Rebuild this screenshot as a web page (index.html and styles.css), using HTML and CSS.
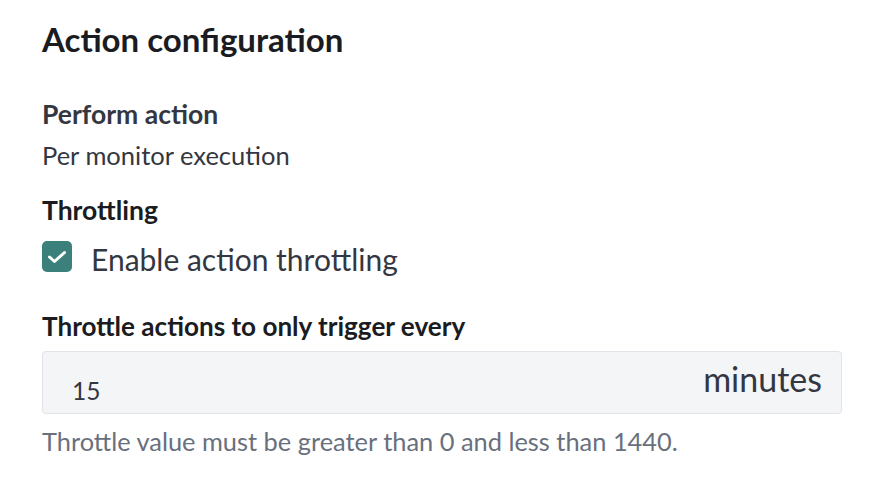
FILE: index.html
```html
<!DOCTYPE html>
<html>
<head>
<meta charset="utf-8">
<link rel="stylesheet" href="styles.css">
</head>
<body>
<div class="panel">
  <h2 class="title">Action configuration</h2>
  <div class="label label-perform">Perform action</div>
  <div class="value">Per monitor execution</div>
  <div class="label label-throttling">Throttling</div>
  <div class="check-row">
    <span class="checkbox">
      <svg width="20" height="14" viewBox="0 0 20 14"><path d="M2.5 7 L7.5 11.5 L17.5 2.5" fill="none" stroke="#fff" stroke-width="3" stroke-linecap="round" stroke-linejoin="round"/></svg>
    </span>
    <span class="check-label">Enable action throttling</span>
  </div>
  <div class="label label-every">Throttle actions to only trigger every</div>
  <div class="field">
    <span class="field-value">15</span>
    <span class="field-unit">minutes</span>
  </div>
  <div class="help">Throttle value must be greater than 0 and less than 1440.</div>
</div>
</body>
</html>
```
FILE: styles.css
```css
html, body {
  margin: 0;
  padding: 0;
  background: #ffffff;
}
body {
  font-family: Lato, "Open Sans", sans-serif;
  color: #343741;
}
.panel {
  padding: 19px 0 0 42px;
  width: 800px;
}
.title {
  margin: 0;
  font-size: 33px;
  line-height: 40px;
  font-weight: 700;
  color: #1a1c21;
}
.label {
  font-size: 26.5px;
  line-height: 30px;
  font-weight: 700;
  color: #1a1c21;
}
.label-perform {
  margin-top: 40px;
  color: #343741;
}
.value {
  margin-top: 11px;
  font-size: 25.5px;
  line-height: 30px;
}
.label-throttling {
  margin-top: 25px;
}
.check-row {
  margin-top: 16px;
  display: flex;
  align-items: center;
  gap: 19px;
  height: 31px;
}
.checkbox {
  width: 30px;
  height: 31px;
  border-radius: 5px;
  background: #3b807a;
  display: flex;
  align-items: center;
  justify-content: center;
  flex: none;
}
.check-label {
  font-size: 30px;
  line-height: 31px;
  padding-top: 5px;
}
.label-every {
  margin-top: 39px;
  font-size: 26.1px;
}
.field {
  margin-top: 10px;
  height: 61px;
  border: 1px solid #e1e3e8;
  border-radius: 4px;
  background: #f4f5f7;
  display: flex;
  justify-content: space-between;
  align-items: flex-start;
  padding: 0 19px 0 29px;
}
.field-value {
  font-size: 24.5px;
  line-height: 30px;
  margin-top: 24px;
}
.field-unit {
  font-size: 34px;
  line-height: 36px;
  margin-top: 9px;
}
.help {
  margin-top: 13px;
  font-size: 25.4px;
  line-height: 28px;
  color: #69707d;
}
```
